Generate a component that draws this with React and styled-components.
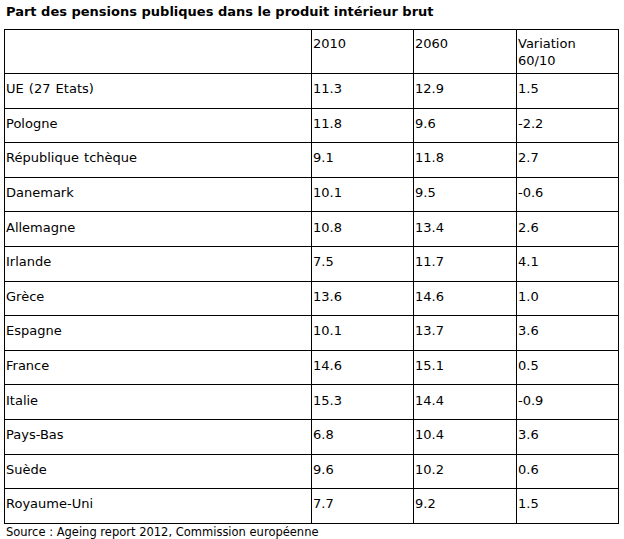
import React from "react";
import styled, { createGlobalStyle } from "styled-components";

const GlobalStyle = createGlobalStyle`
  html, body {
    margin: 0;
    padding: 0;
    background: #ffffff;
  }
  body {
    font-family: "DejaVu Sans", Verdana, sans-serif;
    color: #000000;
  }
`;

const Page = styled.div`
  padding: 2px 4px 0 4px;
  width: 614px;
`;

const Title = styled.h1`
  margin: 0 0 0 2px;
  font-size: 13px;
  font-weight: bold;
  line-height: 20px;
  height: 27px;
`;

const Table = styled.table`
  width: 614px;
  border-collapse: collapse;
  table-layout: fixed;
  border: 1px solid #000;
  font-size: 13px;
  word-spacing: 1px;
`;

const Col = styled.col`
  width: ${(p) => p.$w}px;
`;

const HeadCell = styled.td`
  border: 1px solid #000;
  vertical-align: top;
  padding: 5px 1px 4px 1px;
  height: 31px;
  line-height: 17px;
`;

const Cell = styled.td`
  border: 1px solid #000;
  vertical-align: middle;
  padding: 0 1px 3px 1px;
  height: 30.6px;
  line-height: 16px;
`;

const Source = styled.div`
  margin: 1px 0 0 2px;
  font-size: 11.5px;
  line-height: 14px;
`;

const rows = [
  ["UE (27 Etats)", "11.3", "12.9", "1.5"],
  ["Pologne", "11.8", "9.6", "-2.2"],
  ["République tchèque", "9.1", "11.8", "2.7"],
  ["Danemark", "10.1", "9.5", "-0.6"],
  ["Allemagne", "10.8", "13.4", "2.6"],
  ["Irlande", "7.5", "11.7", "4.1"],
  ["Grèce", "13.6", "14.6", "1.0"],
  ["Espagne", "10.1", "13.7", "3.6"],
  ["France", "14.6", "15.1", "0.5"],
  ["Italie", "15.3", "14.4", "-0.9"],
  ["Pays-Bas", "6.8", "10.4", "3.6"],
  ["Suède", "9.6", "10.2", "0.6"],
  ["Royaume-Uni", "7.7", "9.2", "1.5"],
];

export default function App() {
  return (
    <>
      <GlobalStyle />
      <Page>
        <Title>Part des pensions publiques dans le produit intérieur brut</Title>
        <Table>
          <colgroup>
            <Col $w={307} />
            <Col $w={102} />
            <Col $w={103} />
            <Col $w={102} />
          </colgroup>
          <tbody>
            <tr>
              <HeadCell></HeadCell>
              <HeadCell>2010</HeadCell>
              <HeadCell>2060</HeadCell>
              <HeadCell>
                Variation
                <br />
                60/10
              </HeadCell>
            </tr>
            {rows.map((r) => (
              <tr key={r[0]}>
                {r.map((v, i) => (
                  <Cell key={i}>{v}</Cell>
                ))}
              </tr>
            ))}
          </tbody>
        </Table>
        <Source>Source : Ageing report 2012, Commission européenne</Source>
      </Page>
    </>
  );
}
